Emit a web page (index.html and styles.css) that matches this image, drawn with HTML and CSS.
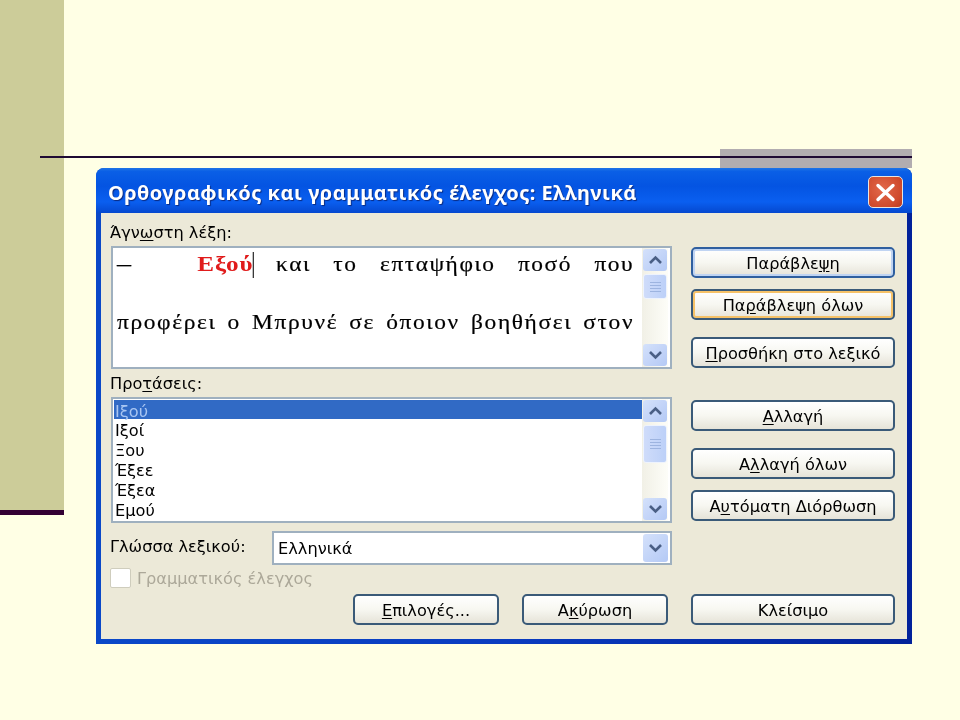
FILE: index.html
```html
<!DOCTYPE html>
<html lang="el">
<head>
<meta charset="utf-8">
<title>Ορθογραφικός και γραμματικός έλεγχος</title>
<link rel="stylesheet" href="styles.css">
</head>
<body>
<div class="slide">
  <div class="side-bar"></div>
  <div class="side-rule"></div>
  <div class="grey-block"></div>
  <div class="top-rule"></div>
  <section class="dialog">
    <header class="titlebar">
      <h1 class="title">Ορθογραφικός και γραμματικός έλεγχος: Ελληνικά</h1>
      <button class="close" type="button" aria-label="Κλείσιμο">
        <svg width="21" height="19" viewBox="0 0 21 19"><path d="M3 2.5 18 16.5M18 2.5 3 16.5" stroke="#fff" stroke-width="3.4" stroke-linecap="round" fill="none"/></svg>
      </button>
    </header>
    <div class="client">
      <div class="left">
        <div class="label label-first">Άγν<u>ω</u>στη λέξη:</div>
        <div class="box textbox">
          <div class="text">
            <p class="line"><span class="dash">–</span> <b class="err">Εξού</b><span class="caret"></span> και το επταψήφιο ποσό που</p>
            <p class="line line-2">προφέρει ο Μπρυνέ σε όποιον βοηθήσει στον</p>
          </div>
          <div class="scroll">
            <span class="sbtn"><svg class="chev" width="15" height="10" viewBox="0 0 15 10"><path d="M2 8 7.5 2.5 13 8" /></svg></span>
            <span class="thumb thumb-a"><i></i><i></i><i></i><i></i></span>
            <span class="sbtn sbtn-end"><svg class="chev" width="15" height="10" viewBox="0 0 15 10"><path d="M2 2 7.5 7.5 13 2" /></svg></span>
          </div>
        </div>
        <div class="label label-second">Προ<u>τ</u>άσεις:</div>
        <div class="box listbox">
          <ul class="items">
            <li class="sel">Ιξού</li>
            <li>Ιξοί</li>
            <li>Ξου</li>
            <li>Έξεε</li>
            <li>Έξεα</li>
            <li>Εμού</li>
          </ul>
          <div class="scroll">
            <span class="sbtn"><svg class="chev" width="15" height="10" viewBox="0 0 15 10"><path d="M2 8 7.5 2.5 13 8" /></svg></span>
            <span class="thumb thumb-b"><i></i><i></i><i></i><i></i></span>
            <span class="sbtn sbtn-end"><svg class="chev" width="15" height="10" viewBox="0 0 15 10"><path d="M2 2 7.5 7.5 13 2" /></svg></span>
          </div>
        </div>
        <div class="lang-row">
          <span class="lang-label">Γλώσσα λεξικού:</span>
          <div class="box combo">
            <span class="combo-value">Ελληνικά</span>
            <span class="sbtn combo-btn"><svg class="chev" width="15" height="10" viewBox="0 0 15 10"><path d="M2 2 7.5 7.5 13 2" /></svg></span>
          </div>
        </div>
        <div class="check-row">
          <span class="check"></span>
          <span class="check-label">Γραμματικός έλεγχος</span>
        </div>
        <div class="bottom-row">
          <button class="btn" type="button"><u>Ε</u>πιλογές...</button>
          <button class="btn" type="button">Α<u>κ</u>ύρωση</button>
        </div>
      </div>
      <div class="right">
        <button class="btn btn-default" type="button">Παράβλε<u>ψ</u>η</button>
        <button class="btn btn-focus gap-11" type="button">Πα<u>ρ</u>άβλεψη όλων</button>
        <button class="btn gap-17" type="button"><u>Π</u>ροσθήκη στο λεξικό</button>
        <button class="btn gap-32" type="button"><u>Α</u>λλαγή</button>
        <button class="btn gap-17" type="button">Α<u>λ</u>λαγή όλων</button>
        <button class="btn gap-11" type="button">Α<u>υ</u>τόματη Διόρθωση</button>
        <button class="btn btn-end" type="button">Κλείσιμο</button>
      </div>
    </div>
  </section>
</div>
</body>
</html>
```

FILE: styles.css
```css
* { box-sizing: border-box; }
html, body { margin: 0; padding: 0; }
body { width: 960px; height: 720px; overflow: hidden; background: #ffffe5; font-family: "DejaVu Sans", "Noto Sans", sans-serif; }
.slide { position: relative; width: 960px; height: 720px; }
.side-bar { position: absolute; left: 0; top: 0; width: 64px; height: 510px; background: #cccc99; }
.side-rule { position: absolute; left: 0; top: 510px; width: 64px; height: 5px; background: #330033; }
.grey-block { position: absolute; left: 720px; top: 149px; width: 192px; height: 19px; background: #b2adb0; }
.top-rule { position: absolute; left: 40px; top: 156px; width: 872px; height: 2px; background: #1f0a33; }

.dialog { position: absolute; left: 96px; top: 168px; width: 816px; height: 476px; display: flex; flex-direction: column; border-radius: 8px 8px 0 0; background: linear-gradient(90deg, #0a48c8, #0a3cc0 50%, #02229a); filter: blur(0.45px); }
.titlebar { height: 45px; display: flex; align-items: center; justify-content: space-between; padding: 0 9px 0 12px; border-radius: 8px 8px 0 0; background: linear-gradient(180deg, #1f74e6 0, #0a5fe6 8%, #0454e2 40%, #0a5ff0 75%, #0548cf 100%); }
.title { margin: 0; padding-top: 3px; font-family: "Noto Sans", sans-serif; font-size: 20px; font-weight: 700; letter-spacing: 0.45px; color: #fff; text-shadow: 1px 1px 1px #0a2a80; white-space: nowrap; }
.close { width: 35px; height: 32px; margin-top: 3px; padding: 0; display: flex; align-items: center; justify-content: center; border: 1px solid #e8e4e0; border-radius: 5px; background: radial-gradient(circle at 40% 40%, #e2694a, #cf4a2c 70%, #b8391f); }

.client { flex: 1; margin: 0 5px 5px; padding: 0 12px 14px 9px; display: flex; gap: 19px; background: #ece9d8; color: #000; font-size: 16.2px; }
.left { width: 562px; display: flex; flex-direction: column; }
.right { width: 204px; display: flex; flex-direction: column; padding-top: 34px; }
u { text-underline-offset: 2px; }

.label { line-height: 20px; }
.label-first { height: 33px; padding-top: 10px; }
.label-second { height: 28px; padding-top: 5px; }
.box { display: flex; border: 2px solid #9fb0bf; background: #fff; margin-left: 1px; }
.textbox { height: 123px; }
.text { width: 529px; padding: 2px 0 0 4px; font-family: "Liberation Serif", serif; font-size: 20px; color: #000; -webkit-text-stroke: 0.2px #000; }
.line { margin: 0; width: 442px; line-height: 26px; letter-spacing: 1.3px; text-align: justify; text-align-last: justify; transform: scaleX(1.17); transform-origin: left center; }
.line-2 { margin-top: 31px; letter-spacing: 1.4px; }
.dash { margin-right: 36px; font-size: 24px; }
.err { color: #e01b1b; -webkit-text-stroke: 0; font-size: 21.5px; letter-spacing: 0.8px; }
.caret { display: inline-block; width: 1px; height: 26px; margin-left: -1px; vertical-align: -7px; background: #222; }

.scroll { width: 26px; margin-left: auto; margin-right: 2px; padding: 0 1px; display: flex; flex-direction: column; background: linear-gradient(90deg, #f1f0e6, #fdfdf8); -webkit-text-stroke: 0; }
.sbtn { height: 22px; margin-top: 1px; display: flex; align-items: center; justify-content: center; border-radius: 3px; background: linear-gradient(135deg, #d4e1fb, #b4c9f5); }
.sbtn-end { margin-top: auto; margin-bottom: 1px; }
.chev path { fill: none; stroke: #4a5f85; stroke-width: 2.6; }
.thumb { margin-top: 3px; display: flex; flex-direction: column; align-items: center; justify-content: center; gap: 2px; border: 1px solid #eef3fd; border-radius: 3px; background: linear-gradient(90deg, #cfdcfa, #bcd0f8); }
.thumb i { display: block; width: 11px; height: 1px; background: #9db4e0; }
.thumb-a { height: 25px; }
.thumb-b { height: 38px; }

.listbox { height: 126px; }
.items { list-style: none; width: 529px; margin: 1px 0 0; padding: 0 0 0 1px; }
.items li { height: 20px; line-height: 24px; padding-left: 1px; }
.items .sel { height: 19px; background: #316ac5; color: #a9c6f2; }

.lang-row { margin-top: 8px; display: flex; align-items: center; }
.lang-label { width: 162px; padding-bottom: 4px; white-space: nowrap; }
.combo { flex: 1; height: 34px; margin-left: 0; align-items: center; justify-content: space-between; }
.combo-value { padding-left: 4px; }
.combo-btn { width: 25px; height: 28px; margin: 0 2px 0 0; }

.check-row { margin-top: 2px; height: 22px; display: flex; align-items: center; gap: 6px; color: #aca899; }
.check { width: 21px; height: 20px; border: 1px solid #cfcdbd; border-radius: 2px; background: #fff; }

.bottom-row { margin-top: auto; display: flex; justify-content: flex-end; gap: 23px; padding-right: 4px; }
.bottom-row .btn { width: 146px; }

.btn { width: 204px; height: 31px; padding: 3px 0 0; border: 2px solid #3a5a78; border-radius: 5px; background: linear-gradient(180deg, #fff 0, #f7f7f1 50%, #e6e3d8 100%); color: #000; font: inherit; line-height: 1; white-space: nowrap; }
.btn-default { border-color: #2f5f9f; box-shadow: inset 0 0 0 2px #c0d4f2; }
.btn-focus { box-shadow: inset 0 0 0 2px #f6c268; }
.btn-end { margin-top: auto; }
.gap-11 { margin-top: 11px; }
.gap-17 { margin-top: 17px; }
.gap-32 { margin-top: 32px; }
```
